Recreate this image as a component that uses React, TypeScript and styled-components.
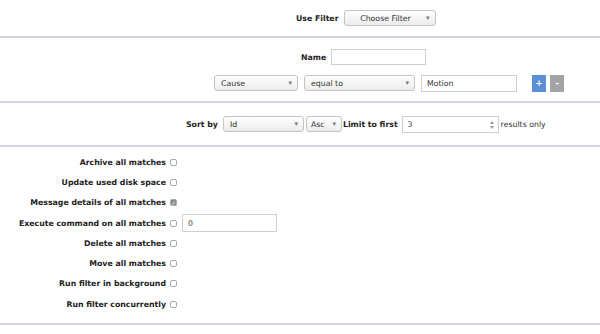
import React from 'react';
import styled, { createGlobalStyle } from 'styled-components';

const GlobalStyle = createGlobalStyle`
  body {
    margin: 0;
    background: #fff;
    font-family: "DejaVu Sans", Verdana, sans-serif;
    font-size: 7.8px;
    color: #222;
  }
`;

const Page = styled.div`
  width: 600px;
  height: 334px;
  overflow: hidden;
`;

const Divider = styled.div`
  height: 2px;
  background: #d4d4e0;
`;

const Row = styled.div<{ $left: number; $height: number; $top?: number }>`
  display: flex;
  align-items: center;
  height: ${p => p.$height}px;
  margin-top: ${p => p.$top ?? 0}px;
  padding-left: ${p => p.$left}px;
`;

const Label = styled.span<{ $gap?: number }>`
  font-weight: bold;
  margin-right: ${p => p.$gap ?? 5}px;
  white-space: nowrap;
`;

const Plain = styled.span`
  margin-left: 2px;
  color: #333;
`;

const SelectBox = styled.div<{ $width: number; $center?: boolean }>`
  position: relative;
  box-sizing: border-box;
  width: ${p => p.$width}px;
  height: 16px;
  margin-right: 6px;
  padding: 0 14px 0 6px;
  display: flex;
  align-items: center;
  justify-content: ${p => (p.$center ? 'center' : 'flex-start')};
  border: 1px solid #c4c4c4;
  border-radius: 3px;
  background: linear-gradient(#ffffff, #ececec);
  color: #333;
  white-space: nowrap;
  &::after {
    content: '▾';
    position: absolute;
    right: 5px;
    top: 3px;
    font-size: 7px;
    color: #777;
  }
`;

const Field = styled.div<{ $width: number; $height?: number }>`
  box-sizing: border-box;
  width: ${p => p.$width}px;
  height: ${p => p.$height ?? 17}px;
  border: 1px solid #cfcfcf;
  background: #fff;
  display: flex;
  align-items: center;
  padding-left: 5px;
  position: relative;
  color: #333;
`;

const Spinner = styled.svg`
  position: absolute;
  right: 4px;
  top: 4px;
`;

const SquareButton = styled.div<{ $kind: 'add' | 'remove' }>`
  width: 14px;
  height: 17px;
  margin-right: 4px;
  display: flex;
  align-items: center;
  justify-content: center;
  color: #fff;
  font-weight: bold;
  font-size: 9px;
  background: ${p => (p.$kind === 'add' ? '#5b8fd6' : '#a4a4a4')};
`;

const Options = styled.div`
  display: grid;
  grid-template-columns: 166px auto;
  grid-auto-rows: 20.3px;
  align-items: center;
  padding: 5px 0 9px;
`;

const OptionLabel = styled.span`
  font-weight: bold;
  text-align: right;
  white-space: nowrap;
`;

const OptionControl = styled.div`
  display: flex;
  align-items: center;
  padding-left: 4px;
`;

const Check = styled.span<{ $on?: boolean }>`
  box-sizing: border-box;
  width: 7px;
  height: 7px;
  border: 1px solid #a9a9a9;
  border-radius: 2px;
  background: ${p => (p.$on ? '#8a8a8a' : '#fff')};
  margin-right: 5px;
  display: inline-flex;
  align-items: center;
  justify-content: center;
  color: #fff;
  font-size: 5px;
`;

const options: { label: string; checked?: boolean; field?: string }[] = [
  { label: 'Archive all matches' },
  { label: 'Update used disk space' },
  { label: 'Message details of all matches', checked: true },
  { label: 'Execute command on all matches', field: '0' },
  { label: 'Delete all matches' },
  { label: 'Move all matches' },
  { label: 'Run filter in background' },
  { label: 'Run filter concurrently' },
];

export default function App() {
  return (
    <Page>
      <GlobalStyle />
      <Row $left={296} $height={36}>
        <Label>Use Filter</Label>
        <SelectBox $width={92} $center>Choose Filter</SelectBox>
      </Row>
      <Divider />
      <Row $left={301} $height={22} $top={8}>
        <Label>Name</Label>
        <Field $width={95} $height={16} />
      </Row>
      <Row $left={214} $height={20} $top={5}>
        <SelectBox $width={84}>Cause</SelectBox>
        <SelectBox $width={111}>equal to</SelectBox>
        <Field $width={96} $height={17} style={{ marginRight: 15 }}>Motion</Field>
        <SquareButton $kind="add">+</SquareButton>
        <SquareButton $kind="remove">-</SquareButton>
      </Row>
      <Row $left={0} $height={8} />
      <Divider />
      <Row $left={186} $height={42}>
        <Label>Sort by</Label>
        <SelectBox $width={81} style={{ marginRight: 2 }}>Id</SelectBox>
        <SelectBox $width={36} style={{ marginRight: 1, paddingLeft: 4 }}>Asc</SelectBox>
        <Label $gap={4}>Limit to first</Label>
        <Field $width={97} $height={17}>
          3
          <Spinner width="4" height="8" viewBox="0 0 4 8">
            <path d="M0 3 L2 0 L4 3 Z M0 5 L2 8 L4 5 Z" fill="#999" />
          </Spinner>
        </Field>
        <Plain>results only</Plain>
      </Row>
      <Divider />
      <Options>
        {options.map(o => (
          <React.Fragment key={o.label}>
            <OptionLabel>{o.label}</OptionLabel>
            <OptionControl>
              <Check $on={o.checked}>{o.checked ? '✓' : ''}</Check>
              {o.field !== undefined && <Field $width={95} $height={18}>{o.field}</Field>}
            </OptionControl>
          </React.Fragment>
        ))}
      </Options>
      <Divider />
    </Page>
  );
}
